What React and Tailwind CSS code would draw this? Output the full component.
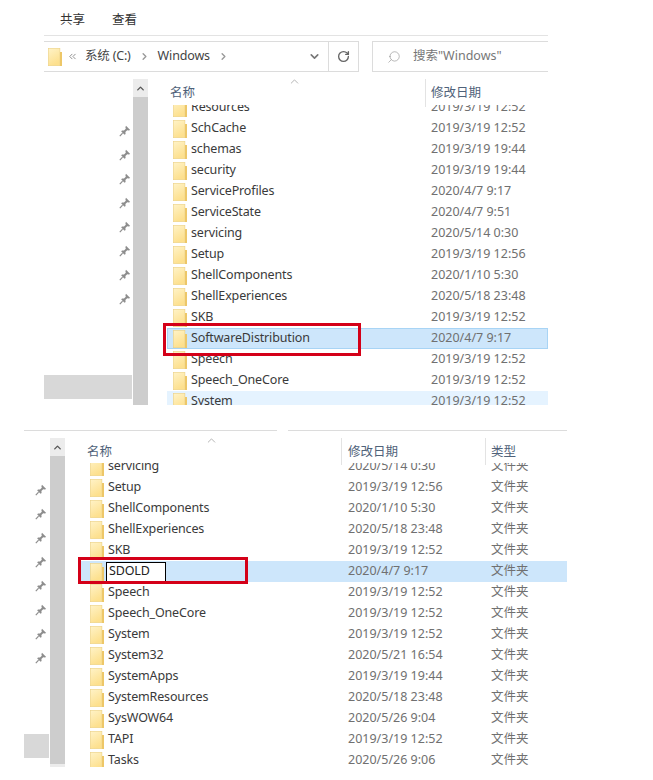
import { useId } from 'react';
import { ChevronDown, ChevronUp, ChevronRight, ChevronsLeft, RotateCw, Search } from 'lucide-react';

const topRows = [
  ['Resources', '2019/3/19 12:52'],
  ['SchCache', '2019/3/19 12:52'],
  ['schemas', '2019/3/19 19:44'],
  ['security', '2019/3/19 19:44'],
  ['ServiceProfiles', '2020/4/7 9:17'],
  ['ServiceState', '2020/4/7 9:51'],
  ['servicing', '2020/5/14 0:30'],
  ['Setup', '2019/3/19 12:56'],
  ['ShellComponents', '2020/1/10 5:30'],
  ['ShellExperiences', '2020/5/18 23:48'],
  ['SKB', '2019/3/19 12:52'],
  ['SoftwareDistribution', '2020/4/7 9:17', 'selected'],
  ['Speech', '2019/3/19 12:52'],
  ['Speech_OneCore', '2019/3/19 12:52'],
  ['System', '2019/3/19 12:52', 'hover'],
];

const bottomRows = [
  ['servicing', '2020/5/14 0:30'],
  ['Setup', '2019/3/19 12:56'],
  ['ShellComponents', '2020/1/10 5:30'],
  ['ShellExperiences', '2020/5/18 23:48'],
  ['SKB', '2019/3/19 12:52'],
  ['SDOLD', '2020/4/7 9:17', 'rename'],
  ['Speech', '2019/3/19 12:52'],
  ['Speech_OneCore', '2019/3/19 12:52'],
  ['System', '2019/3/19 12:52'],
  ['System32', '2020/5/21 16:54'],
  ['SystemApps', '2019/3/19 19:44'],
  ['SystemResources', '2020/5/18 23:48'],
  ['SysWOW64', '2020/5/26 9:04'],
  ['TAPI', '2019/3/19 12:52'],
  ['Tasks', '2020/5/26 9:06'],
];

const pins = [0, 1, 2, 3, 4, 5, 6, 7];

function FolderIcon() {
  const id = useId();
  return (
    <svg width="14" height="18" viewBox="0 0 14 18" className="shrink-0">
      <defs>
        <linearGradient id={id} x1="0" y1="0" x2="0.4" y2="1">
          <stop offset="0" stopColor="#fff3c8" />
          <stop offset="1" stopColor="#fde08e" />
        </linearGradient>
      </defs>
      <rect x="0.3" y="0.3" width="11.6" height="17.4" fill={`url(#${id})`} stroke="#ecd083" strokeWidth="0.6" />
      <rect x="12" y="4" width="2" height="14" fill="#edc768" />
    </svg>
  );
}

function PinIcon() {
  return (
    <svg width="12" height="12" viewBox="0 0 12 12" className="shrink-0">
      <path d="M7 0.8 L11.2 5 L9.8 5.6 L8.2 5.2 L6.4 7 L6.6 9 L5.6 9.8 L2.2 6.4 L3 5.4 L5 5.6 L6.8 3.8 L6.4 2.2 Z" fill="#8d8d8d" />
      <path d="M3.6 8.2 L0.8 11.2" stroke="#8d8d8d" strokeWidth="1.2" />
    </svg>
  );
}

function Row({ name, date, state, nameWidth, inset, showType, redClass }) {
  const bg =
    state === 'selected' || state === 'rename'
      ? 'bg-[#cde6fb]'
      : state === 'hover'
        ? 'bg-[#e5f3ff]'
        : '';
  return (
    <div className={`relative flex h-[21px] items-center ${bg}`}>
      {state === 'selected' && <div className="absolute inset-0 border border-[#a8d4f5]" />}
      <div className={`flex items-center ${inset} ${nameWidth}`}>
        <FolderIcon />
        {state === 'rename' ? (
          <span className="ml-[2px] flex h-[20px] w-[60px] items-center border border-black bg-white pl-[2px] tracking-[-0.15px] text-[#222]">
            {name}
          </span>
        ) : (
          <span className="ml-[4px] whitespace-nowrap tracking-[-0.15px] text-[#3a3a3a]">{name}</span>
        )}
      </div>
      <span className={`whitespace-nowrap text-[#707070] ${showType ? 'w-[143px]' : ''}`}>{date}</span>
      {showType && <span className="text-[#707070]">文件夹</span>}
      {redClass && <div className={`absolute z-10 border-[3px] border-[#d40018] ${redClass}`} />}
    </div>
  );
}

function Scrollbar({ height, endCap }) {
  return (
    <div className={`flex w-[15px] shrink-0 flex-col bg-[#cdcdcd] ${height}`}>
      <div className="flex h-[18px] items-center justify-center bg-[#ececec]">
        <ChevronUp size={11} strokeWidth={3} className="text-[#555]" />
      </div>
      {endCap && <div className="mt-auto h-[3px] bg-[#ececec]" />}
    </div>
  );
}

function TopPanel() {
  return (
    <section className="ml-[44px] w-[504px]">
      <div className="flex h-[36px] items-end gap-[27px] border-b border-[#e3e3e3] pb-[5px] pl-[16px] text-[#333]">
        <span>共享</span>
        <span>查看</span>
      </div>
      <div className="mt-[5px] flex h-[31px]">
        <div className="flex w-[284px] items-center border-y border-[#dcdcdc] pl-[4px]">
          <FolderIcon />
          <ChevronsLeft size={11} className="ml-[5px] text-[#888]" />
          <span className="ml-[7px] tracking-[-0.2px] text-[#444]">系统 (C:)</span>
          <ChevronRight size={11} strokeWidth={3} className="ml-[8px] text-[#999]" />
          <span className="ml-[8px] tracking-[-0.15px] text-[#444]">Windows</span>
          <ChevronRight size={11} strokeWidth={3} className="ml-[8px] text-[#999]" />
          <ChevronDown size={13} strokeWidth={3} className="ml-[79px] text-[#777]" />
        </div>
        <div className="flex w-[31px] items-center justify-center border border-[#dcdcdc]">
          <RotateCw size={13} strokeWidth={2.5} className="text-[#666]" />
        </div>
        <div className="ml-[13px] flex flex-1 items-center border-y border-l border-[#dcdcdc] pl-[14px] text-[#777]">
          <Search size={14} strokeWidth={1} className="-scale-x-100 text-[#888]" />
          <span className="ml-[12px]">搜索"Windows"</span>
        </div>
      </div>
      <div className="mt-[7px] flex h-[326px]">
        <div className="flex w-[89px] shrink-0 flex-col">
          <div className="flex flex-col items-end gap-[12px] pr-[2px] pt-[46px]">
            {pins.map((p) => (
              <PinIcon key={p} />
            ))}
          </div>
          <div className="mt-auto mb-[6px] mr-[1px] h-[24px] bg-[#d8d8d8]" />
        </div>
        <Scrollbar height="h-[326px]" />
        <div className="ml-[19px] min-w-0 flex-1">
          <div className="relative h-[26px]">
            <div className="flex h-full items-center pl-[3px] pt-[2px] text-[#4f6279]">
              <span className="w-[261px]">名称</span>
              <span>修改日期</span>
            </div>
            <ChevronUp size={13} strokeWidth={1} className="absolute left-[121px] top-[-4px] text-[#777]" />
            <div className="absolute left-[258px] top-0 h-[28px] w-px bg-[#e3e3e3]" />
          </div>
          <div className="-ml-[6px] h-[300px] overflow-hidden pl-[6px]">
            <div className="-mt-[8px]">
              {topRows.map(([name, date, state]) => (
                <Row
                  key={name}
                  name={name}
                  date={date}
                  state={state}
                  inset="pl-[6px]"
                  nameWidth="w-[264px]"
                  redClass={state === 'selected' ? 'left-[-4px] top-[-5px] h-[33px] w-[198px]' : ''}
                />
              ))}
            </div>
          </div>
        </div>
      </div>
    </section>
  );
}

function BottomPanel() {
  return (
    <section className="ml-[24px] mt-[25px] w-[543px]">
      <div className="flex h-px">
        <div className="w-[253px] bg-[#dcdcdc]" />
        <div className="ml-[11px] flex-1 bg-[#dcdcdc]" />
      </div>
      <div className="mt-[7px] flex h-[329px]">
        <div className="flex w-[26px] shrink-0 flex-col">
          <div className="flex flex-col items-end gap-[12px] pr-[3px] pt-[46px]">
            {pins.map((p) => (
              <PinIcon key={p} />
            ))}
          </div>
          <div className="mt-auto mb-[9px] mr-[1px] h-[24px] bg-[#d8d8d8]" />
        </div>
        <Scrollbar height="h-[329px]" endCap />
        <div className="ml-[15px] min-w-0 flex-1">
          <div className="relative h-[25px]">
            <div className="flex h-[23px] items-center pl-[7px] pt-[5px] text-[#4f6279]">
              <span className="w-[261px]">名称</span>
              <span className="w-[143px]">修改日期</span>
              <span>类型</span>
            </div>
            <ChevronUp size={13} strokeWidth={1} className="absolute left-[125px] top-[-4px] text-[#777]" />
            <div className="absolute left-[261px] top-0 h-[27px] w-px bg-[#e3e3e3]" />
            <div className="absolute left-[405px] top-0 h-[27px] w-px bg-[#e3e3e3]" />
          </div>
          <div className="-ml-[4px] h-[304px] overflow-hidden pl-[4px]">
            <div className="-mt-[7px]">
              {bottomRows.map(([name, date, state]) => (
                <Row
                  key={name}
                  name={name}
                  date={date}
                  state={state}
                  inset="pl-[10px]"
                  nameWidth="w-[268px]"
                  showType
                  redClass={state === 'rename' ? 'left-[-2px] top-[-4px] h-[27px] w-[170px]' : ''}
                />
              ))}
            </div>
          </div>
        </div>
      </div>
    </section>
  );
}

export default function App() {
  return (
    <div className="h-[780px] w-[653px] overflow-hidden bg-white font-['Noto_Sans','Noto_Sans_CJK_SC',sans-serif] text-[12.5px]">
      <TopPanel />
      <BottomPanel />
    </div>
  );
}
